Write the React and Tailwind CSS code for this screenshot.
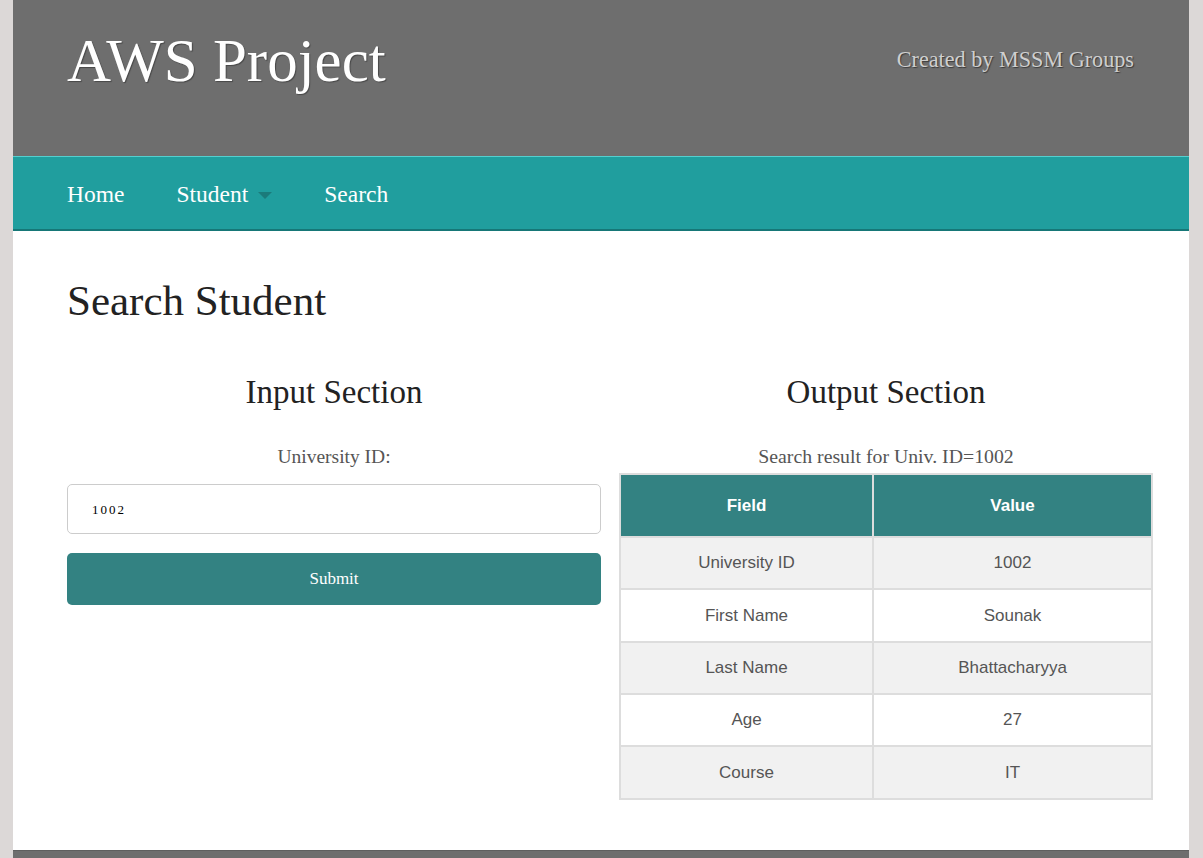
import React from "react";

const serif = "font-['Liberation_Serif',Georgia,serif]";
const sans = "font-['Liberation_Sans',Arial,sans-serif]";

const rows = [
  ["University ID", "1002"],
  ["First Name", "Sounak"],
  ["Last Name", "Bhattacharyya"],
  ["Age", "27"],
  ["Course", "IT"],
];

export default function App() {
  return (
    <div className="min-h-screen bg-[#dcd8d7]">
      <div className="ml-[13px] w-[1176px] bg-white">
        {/* Header */}
        <header className={`flex h-[156px] items-start justify-between bg-[#6e6e6e] px-[54px] ${serif}`}>
          <h1 className="mt-[30px] text-[61px] leading-none text-white [text-shadow:1px_1px_1px_rgba(0,0,0,0.35)]">
            AWS Project
          </h1>
          <div className="mr-px mt-[49px] text-[22.2px] leading-none text-[#cfcfcf] [text-shadow:1px_1px_1px_#3a3a3a]">
            Created by MSSM Groups
          </div>
        </header>

        {/* Nav */}
        <nav className={`flex h-[75px] items-center border-t border-b-2 border-t-[#55cfcf] border-b-[#167777] bg-[#209e9e] px-[54px] pt-[3px] ${serif}`}>
          <a className="text-[23.5px] leading-none text-white">Home</a>
          <a className="ml-[52px] flex items-center text-[23.5px] leading-none text-white">
            Student
            <span className="ml-[10px] mt-[2px] h-0 w-0 border-x-[7px] border-t-[7px] border-x-transparent border-t-[#1b7b7b]" />
          </a>
          <a className="ml-[52px] text-[23.5px] leading-none text-white">Search</a>
        </nav>

        {/* Main */}
        <main className={`pb-[50px] pl-[54px] pr-[36px] pt-[48px] ${serif}`}>
          <h2 className="text-[43px] leading-none text-[#222]">Search Student</h2>

          <div className="mt-[54px] flex gap-[18px]">
            {/* Input section */}
            <section className="flex w-[534px] shrink-0 flex-col">
              <h3 className="text-center text-[33px] leading-none text-[#222]">Input Section</h3>
              <label className="mt-[38px] text-center text-[19.5px] leading-none text-[#555]">
                University ID:
              </label>
              <div className="mt-[17px] flex h-[50px] items-center rounded-[5px] border border-[#cccccc] bg-white pl-[24px]">
                <span className="pt-[2px] text-[13px] leading-none tracking-[2px] text-black">1002</span>
              </div>
              <button className="mt-[19px] flex h-[52px] items-center justify-center rounded-[5px] bg-[#338282] text-[17px] leading-none text-white">
                Submit
              </button>
            </section>

            {/* Output section */}
            <section className="flex w-[534px] shrink-0 flex-col">
              <h3 className="text-center text-[33px] leading-none text-[#222]">Output Section</h3>
              <p className="mt-[38px] text-center text-[19.8px] leading-none text-[#555]">
                Search result for Univ. ID=1002
              </p>
              <table className={`mt-[6px] w-[534px] border-collapse border-2 border-[#dddddd] ${sans}`}>
                <thead>
                  <tr>
                    <th className="h-[63px] w-[253px] border-2 border-[#dddddd] bg-[#338282] text-[17px] font-bold text-white">
                      Field
                    </th>
                    <th className="h-[63px] border-2 border-[#dddddd] bg-[#338282] text-[17px] font-bold text-white">
                      Value
                    </th>
                  </tr>
                </thead>
                <tbody>
                  {rows.map(([f, v], i) => (
                    <tr key={f} className={i % 2 === 0 ? "bg-[#f1f1f1]" : "bg-white"}>
                      <td className="h-[52.4px] border-2 border-[#dddddd] text-center text-[17px] text-[#555]">{f}</td>
                      <td className="h-[52.4px] border-2 border-[#dddddd] text-center text-[17px] text-[#555]">{v}</td>
                    </tr>
                  ))}
                </tbody>
              </table>
            </section>
          </div>
        </main>

        {/* Footer */}
        <footer className="h-[60px] border-t border-[#5f5f5f] bg-[#6e6e6e]" />
      </div>
    </div>
  );
}
